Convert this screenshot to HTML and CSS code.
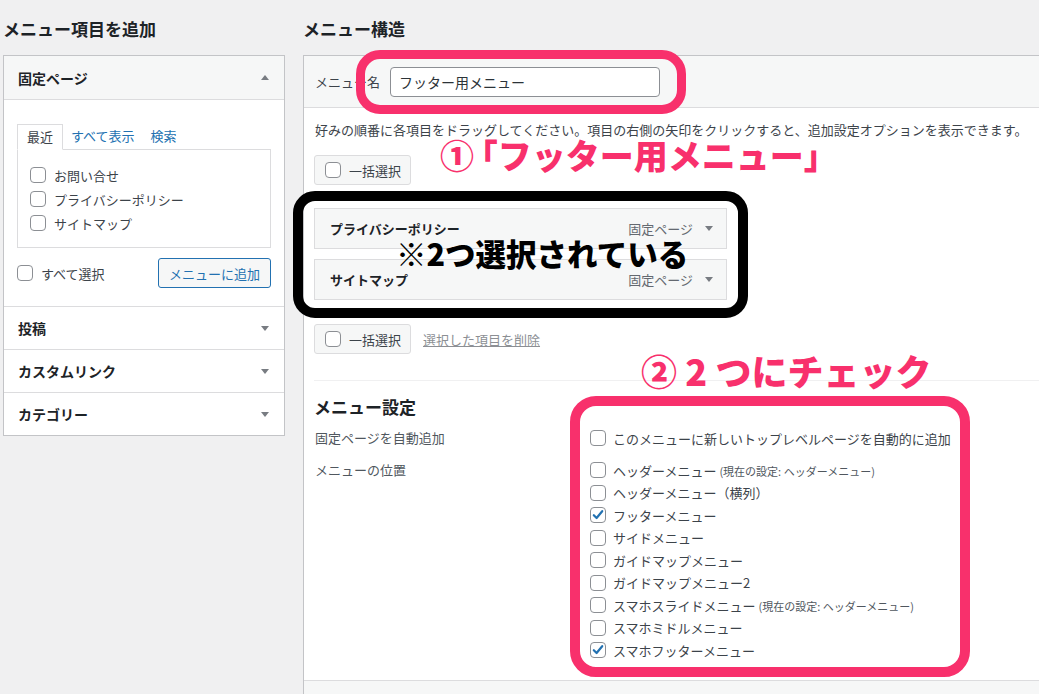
FILE: index.html
```html
<!DOCTYPE html>
<html lang="ja">
<head>
<meta charset="utf-8">
<title>メニュー</title>
<link rel="stylesheet" href="styles.css">
</head>
<body>
<div class="page">
  <div class="col-left">
    <h2 class="col-title">メニュー項目を追加</h2>
    <div class="acc">
      <div class="acc-sec open">
        <div class="acc-head"><span>固定ページ</span><i class="tri up"></i></div>
        <div class="acc-body">
          <div class="tabs"><span class="tab active">最近</span><a class="tab link">すべて表示</a><a class="tab link">検索</a></div>
          <div class="list">
            <div class="row"><span class="cb"></span><span>お問い合せ</span></div>
            <div class="row"><span class="cb"></span><span>プライバシーポリシー</span></div>
            <div class="row"><span class="cb"></span><span>サイトマップ</span></div>
          </div>
          <div class="acc-foot">
            <div class="row"><span class="cb"></span><span>すべて選択</span></div>
            <button class="btn-add">メニューに追加</button>
          </div>
        </div>
      </div>
      <div class="acc-sec"><div class="acc-head"><span>投稿</span><i class="tri"></i></div></div>
      <div class="acc-sec"><div class="acc-head"><span>カスタムリンク</span><i class="tri"></i></div></div>
      <div class="acc-sec"><div class="acc-head"><span>カテゴリー</span><i class="tri"></i></div></div>
    </div>
  </div>

  <div class="col-right">
    <h2 class="col-title">メニュー構造</h2>
    <div class="panel">
      <div class="panel-head">
        <span class="name-label">メニュー名</span>
        <div class="name-input">フッター用メニュー</div>
      </div>
      <div class="panel-body">
        <p class="desc">好みの順番に各項目をドラッグしてください。項目の右側の矢印をクリックすると、追加設定オプションを表示できます。</p>
        <div class="bulk"><span class="cb"></span><span>一括選択</span></div>
        <ul class="items">
          <li class="item"><span class="item-title">プライバシーポリシー</span><span class="item-type">固定ページ</span><i class="tri"></i></li>
          <li class="item"><span class="item-title">サイトマップ</span><span class="item-type">固定ページ</span><i class="tri"></i></li>
        </ul>
        <div class="bulk-row">
          <div class="bulk"><span class="cb"></span><span>一括選択</span></div>
          <a class="del">選択した項目を削除</a>
        </div>
        <hr class="sep">
        <h3 class="set-title">メニュー設定</h3>
        <div class="set-row first">
          <div class="set-label">固定ページを自動追加</div>
          <div class="set-opts">
            <div class="opt"><span class="cb"></span><span>このメニューに新しいトップレベルページを自動的に追加</span></div>
          </div>
        </div>
        <div class="set-row second">
          <div class="set-label">メニューの位置</div>
          <div class="set-opts">
            <div class="opt"><span class="cb"></span><span>ヘッダーメニュー <small>(現在の設定: ヘッダーメニュー)</small></span></div>
            <div class="opt"><span class="cb"></span><span>ヘッダーメニュー（横列）</span></div>
            <div class="opt"><span class="cb checked"><svg viewBox="0 0 16 16" width="16" height="16"><path d="M3.8 8.2 L6.6 11 L12.2 4.2" fill="none" stroke="#2271b1" stroke-width="2.2" stroke-linecap="round" stroke-linejoin="round"/></svg></span><span>フッターメニュー</span></div>
            <div class="opt"><span class="cb"></span><span>サイドメニュー</span></div>
            <div class="opt"><span class="cb"></span><span>ガイドマップメニュー</span></div>
            <div class="opt"><span class="cb"></span><span>ガイドマップメニュー2</span></div>
            <div class="opt"><span class="cb"></span><span>スマホスライドメニュー <small>(現在の設定: ヘッダーメニュー)</small></span></div>
            <div class="opt"><span class="cb"></span><span>スマホミドルメニュー</span></div>
            <div class="opt"><span class="cb checked"><svg viewBox="0 0 16 16" width="16" height="16"><path d="M3.8 8.2 L6.6 11 L12.2 4.2" fill="none" stroke="#2271b1" stroke-width="2.2" stroke-linecap="round" stroke-linejoin="round"/></svg></span><span>スマホフッターメニュー</span></div>
          </div>
        </div>
      </div>
      <div class="panel-foot"></div>
    </div>
  </div>

  <div class="mark pink-box box1"></div>
  <div class="mark black-box"></div>
  <div class="mark pink-box box2"></div>
  <div class="anno anno1">①<span class="open-br">「</span>フッター用メニュー」</div>
  <div class="anno anno2">※2つ選択されている</div>
  <div class="anno anno3">② 2 つにチェック</div>
</div>
</body>
</html>
```

FILE: styles.css
```css
* { box-sizing: border-box; }
html, body { margin: 0; overflow: hidden; }
body {
  background: #f0f0f1;
  font-family: "Noto Sans CJK JP", "Noto Sans", sans-serif;
  font-size: 13px;
  color: #3c434a;
}
.page {
  position: relative;
  display: flex;
  gap: 18px;
  padding-left: 3px;
  width: 1039px;
  height: 694px;
}
.col-left { flex: 0 0 282px; }
.col-right { flex: 0 0 760px; }
.col-title {
  margin: 0;
  padding-top: 18px;
  height: 55px;
  font-size: 17px;
  line-height: 22px;
  font-weight: 700;
  color: #1d2327;
}

/* checkbox */
.cb {
  display: inline-block;
  flex: 0 0 16px;
  width: 16px;
  height: 16px;
  border: 1px solid #8c8f94;
  border-radius: 4px;
  background: #fff;
  position: relative;
}
.cb svg { position: absolute; left: -1px; top: -1px; }
.tri {
  display: inline-block;
  width: 0; height: 0;
  border-left: 4px solid transparent;
  border-right: 4px solid transparent;
  border-top: 5px solid #787c82;
}
.tri.up { border-top: 0; border-bottom: 5px solid #787c82; }

/* left accordion */
.acc { background: #fff; border: 1px solid #c3c4c7; }
.acc-sec + .acc-sec { border-top: 1px solid #dcdcde; }
.acc-head {
  height: 42px;
  display: flex;
  align-items: center;
  justify-content: space-between;
  padding: 0 15px 0 14px;
  font-size: 14px;
  font-weight: 700;
  color: #1d2327;
}
.open .acc-head { height: 44px; background: #f6f7f7; border-bottom: 1px solid #dcdcde; }
.acc-body { padding: 24px 13px 18px; }
.tabs { display: flex; height: 26px; margin-bottom: -1px; position: relative; }
.tab { line-height: 24px; padding: 0 8px; color: #2271b1; }
.tab.active {
  color: #3c434a;
  background: #fff;
  border: 1px solid #dcdcde;
  border-bottom-color: #fff;
  padding: 0 9px;
}
.list {
  border: 1px solid #dcdcde;
  padding: 13px 12px 12px;
}
.row { display: flex; align-items: center; gap: 8px; height: 24px; }
.acc-foot {
  margin-top: 10px;
  display: flex;
  align-items: center;
  justify-content: space-between;
}
.btn-add {
  height: 30px;
  padding: 0 10px;
  border: 1px solid #2271b1;
  border-radius: 3px;
  background: #f6f7f7;
  color: #2271b1;
  font-family: inherit;
  font-size: 13px;
}

/* right panel */
.panel { background: #fff; border: 1px solid #c3c4c7; border-right: 0; }
.panel-head {
  height: 52px;
  background: #f6f7f7;
  border-bottom: 1px solid #dcdcde;
  display: flex;
  align-items: center;
  padding-left: 11px;
}
.name-label { width: 75px; color: #3c434a; }
.name-input {
  width: 270px;
  height: 30px;
  border: 1px solid #8c8f94;
  border-radius: 4px;
  background: #fff;
  padding: 0 8px;
  font-size: 14px;
  line-height: 28px;
  color: #2c3338;
}
.panel-body { padding: 12px 0 18.5px 10px; }
.desc { margin: 0; line-height: 20px; padding-left: 1px; }
.bulk {
  display: flex;
  width: fit-content;
  align-items: center;
  gap: 8px;
  height: 30px;
  padding: 0 9px 0 10px;
  border: 1px solid #dcdcde;
  border-radius: 3px;
  background: #f6f7f7;
  margin-top: 15px;
}
.items {
  list-style: none;
  margin: 23px 0 0;
  padding: 0;
  width: 413px;
  display: flex;
  flex-direction: column;
  gap: 10px;
}
.item {
  height: 41px;
  display: flex;
  align-items: center;
  padding: 0 13px 0 15px;
  background: #f6f7f7;
  border: 1px solid #dcdcde;
}
.item-title { flex: 1; font-weight: 700; color: #1d2327; }
.item-type { color: #646970; margin-right: 12px; }
.bulk-row { display: flex; align-items: center; gap: 12px; margin-top: 24px; }
.bulk-row .bulk { margin-top: 0; }
.del { color: #8c8f94; text-decoration: underline; }
.sep { margin: 26px 0 0; border: 0; border-top: 1px solid #f0f0f1; height: 0; }
.set-title {
  margin: 14px 0 0;
  font-size: 17px;
  line-height: 24px;
  font-weight: 700;
  color: #1d2327;
}
.set-row { display: flex; }
.set-row.first { margin-top: 8px; }
.set-row.second { margin-top: 9.5px; }
.set-label { width: 276px; line-height: 22.5px; color: #50575e; padding-left: 1px; }
.opt { display: flex; align-items: center; gap: 7px; height: 22.5px; white-space: nowrap; }
.opt small { font-size: 11px; color: #50575e; }
.panel-foot { height: 20px; background: #f6f7f7; border-top: 1px solid #dcdcde; }

/* annotations */
.mark { position: absolute; }
.pink-box { border: 9px solid #f8306c; }
.box1 { left: 356px; top: 50px; width: 330px; height: 64px; border-radius: 24px; }
.box2 { left: 570px; top: 396px; width: 400px; height: 281px; border-width: 10px; border-radius: 26px; }
.black-box {
  left: 293px; top: 191px; width: 455px; height: 127px;
  border: 10px solid #000; border-radius: 22px;
}
.anno {
  position: absolute;
  font-weight: 900;
  line-height: 40px;
  white-space: nowrap;
}
.anno1 { left: 440px; top: 135px; font-size: 34px; color: #f8306c; }
.anno1 .open-br { margin-left: -0.3em; }
.anno2 { left: 396px; top: 233px; font-size: 30.5px; color: #000; }
.anno3 { left: 641px; top: 350px; font-size: 36px; color: #f8306c; }
```
